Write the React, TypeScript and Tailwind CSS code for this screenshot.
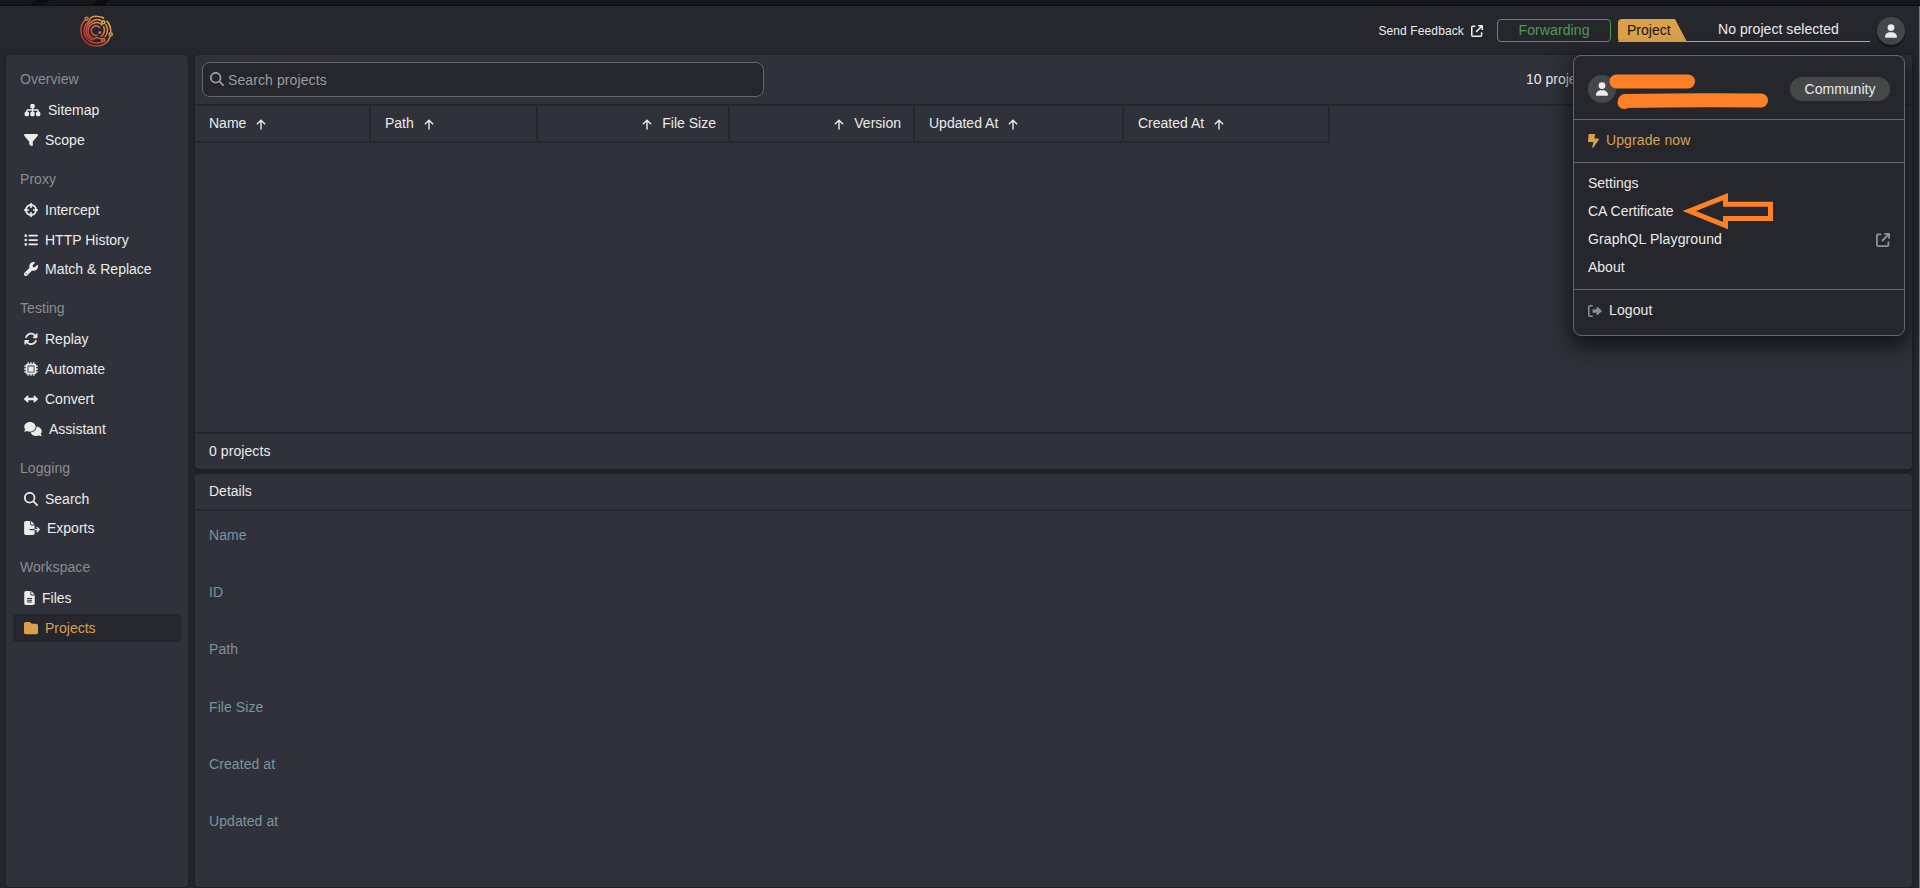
import type { ReactNode } from 'react'
import clsx from 'clsx'
import type { IconType } from 'react-icons'
import {
  FaSitemap, FaFilter, FaListUl, FaWrench, FaArrowsRotate, FaMicrochip, FaLeftRight,
  FaComments, FaMagnifyingGlass, FaFileExport, FaFileLines, FaFolder, FaUser,
} from 'react-icons/fa6'

type NavItem = { label: string; icon: IconType; size: string; active?: boolean }

function Crosshair({ className }: { className?: string }) {
  return (
    <svg viewBox="0 0 14 14" className={className} fill="none" stroke="currentColor" strokeWidth="2">
      <circle cx="7" cy="7" r="5" />
      <path d="M7 0v5M7 9V14M0 7h5M9 7H14" strokeWidth="1.6" />
    </svg>
  )
}

const groups: { title: string; items: NavItem[] }[] = [
  {
    title: 'Overview',
    items: [
      { label: 'Sitemap', icon: FaSitemap, size: 'w-[17px]' },
      { label: 'Scope', icon: FaFilter, size: 'w-3.5' },
    ],
  },
  {
    title: 'Proxy',
    items: [
      { label: 'Intercept', icon: Crosshair as IconType, size: 'w-3.5' },
      { label: 'HTTP History', icon: FaListUl, size: 'w-3.5' },
      { label: 'Match & Replace', icon: FaWrench, size: 'w-3.5' },
    ],
  },
  {
    title: 'Testing',
    items: [
      { label: 'Replay', icon: FaArrowsRotate, size: 'w-3.5' },
      { label: 'Automate', icon: FaMicrochip, size: 'w-3.5' },
      { label: 'Convert', icon: FaLeftRight, size: 'w-3.5' },
      { label: 'Assistant', icon: FaComments, size: 'w-[18px]' },
    ],
  },
  {
    title: 'Logging',
    items: [
      { label: 'Search', icon: FaMagnifyingGlass, size: 'w-3.5' },
      { label: 'Exports', icon: FaFileExport, size: 'w-4' },
    ],
  },
  {
    title: 'Workspace',
    items: [
      { label: 'Files', icon: FaFileLines, size: 'w-[11px]' },
      { label: 'Projects', icon: FaFolder, size: 'w-3.5', active: true },
    ],
  },
]

const columns = [
  { label: 'Name', width: 'w-[176px]' },
  { label: 'Path', width: 'w-[167px]' },
  { label: 'File Size', width: 'w-[192px]', right: true },
  { label: 'Version', width: 'w-[185px]', right: true },
  { label: 'Updated At', width: 'w-[209px]' },
  { label: 'Created At', width: 'w-[206px]' },
]

const details = ['Name', 'ID', 'Path', 'File Size', 'Created at', 'Updated at']

function Logo() {
  return (
    <svg viewBox="0 0 34 32" className="h-8 w-[34px]" fill="none" stroke="url(#logo)" strokeWidth="1.5" strokeLinecap="round">
      <defs>
        <linearGradient id="logo" x1="4" y1="27" x2="27" y2="5" gradientUnits="userSpaceOnUse">
          <stop stopColor="#b5282e" />
          <stop offset="0.5" stopColor="#d0603d" />
          <stop offset="1" stopColor="#eab04f" />
        </linearGradient>
      </defs>
      <path d="M6.2 4.8A15 15 0 0 0 28.5 26.4" />
      <path d="M31 21.5A15 15 0 0 1 28.4 26.5M31.8 16.5C31.7 12 30.5 9 28 6.3" />
      <path d="M12 2.6C15 1 21 .8 24.5 3M12 2.6L10 6.3A12 12 0 0 0 16.5 28C19.5 28.2 22 27.6 24 26.4" />
      <path d="M13.5 6.2C16 4.4 19.5 4.2 22 5.6M13.5 6.2A10.6 10.6 0 0 0 8.5 21C9.7 23 11.5 24.5 13 25" />
      <path d="M15 8.3A8 8 0 0 0 12.6 22.6L15.2 24L17 22.5L22 23.7M15 8.3C18 7 21 7.8 23 10" />
      <path d="M27 9.5C29.5 14 28.5 19 26.2 21.6M24.8 11.8C26 16 24.8 19.5 22.4 21.2" />
      <path d="M20.4 12.4A4.7 4.7 0 1 0 18.2 20.2" />
      <g strokeWidth="1.6">
        <circle cx="7.6" cy="3.8" r="1.5" />
        <circle cx="24.3" cy="7.2" r="1.5" />
        <circle cx="31.7" cy="19.2" r="1.5" />
        <circle cx="24.2" cy="25" r="1.5" />
        <circle cx="20.8" cy="17.6" r="0.7" />
      </g>
    </svg>
  )
}

function ExternalLink({ className }: { className?: string }) {
  return (
    <svg viewBox="0 0 14 14" className={className} fill="none" stroke="currentColor" strokeWidth="1.8" strokeLinejoin="round">
      <path d="M5.2 1.4H2A1.2 1.2 0 0 0 .9 2.6V12A1.2 1.2 0 0 0 2 13.1H11.2A1.2 1.2 0 0 0 12.4 12V8.4" />
      <path d="M8.3 .9H13.1V5.7M13.1 .9L6 8" />
    </svg>
  )
}

function SortArrow() {
  return (
    <svg viewBox="0 0 10 11" className="mt-0.5 h-[11px] w-2.5" fill="none" stroke="currentColor" strokeWidth="1.4">
      <path d="M5 10.5V1.3M.9 5.3L5 1.2L9.1 5.3" />
    </svg>
  )
}

function Bolt() {
  return (
    <svg viewBox="0 0 11 14" className="h-3.5 w-[11px]" fill="currentColor">
      <path d="M1.2 0H7.2L6.4 4.6H10.2C10.9 4.6 11.1 5.2 10.8 5.7L5.4 13.6C5 14.2 4.1 13.9 4.3 13.1L5.4 8.1H.8C.3 8.1 0 7.7 0 7.2L.5.7C.6.3.8 0 1.2 0Z" />
    </svg>
  )
}

function LogoutIcon() {
  return (
    <svg viewBox="0 0 14 12" className="h-3 w-3.5">
      <path d="M4.8.8H2A1.2 1.2 0 0 0 .8 2V10A1.2 1.2 0 0 0 2 11.2H4.8" fill="none" stroke="currentColor" strokeWidth="1.6" />
      <path d="M4.6 4.2H8.6V2.6C8.6 1.9 9.3 1.7 9.7 2.1L13.6 5.5C13.9 5.8 13.9 6.2 13.6 6.5L9.7 9.9C9.3 10.3 8.6 10.1 8.6 9.4V7.8H4.6Z" fill="currentColor" />
    </svg>
  )
}

function Avatar({ className }: { className?: string }) {
  return (
    <div className={clsx('flex size-7 shrink-0 items-center justify-center rounded-full bg-[#454849]', className)}>
      <FaUser className="h-3.5 w-3" />
    </div>
  )
}

function MenuSection({ className, children }: { className?: string; children: ReactNode }) {
  return <div className={clsx('border-b border-[#65676a] px-3.5', className)}>{children}</div>
}

function UserMenu() {
  return (
    <div className="absolute top-[55px] left-[1573px] h-[281px] w-[332px] rounded-lg border border-[#65676a] bg-[#25272d] shadow-[0_8px_22px_2px_#101116]">
      <MenuSection className="flex h-16 items-center justify-between">
        <Avatar className="mt-0.5" />
        <div className="mt-[3px] flex h-6 w-[100px] items-center justify-center rounded-full bg-[#454849]">Community</div>
      </MenuSection>
      <MenuSection className="flex h-[43px] items-center gap-[7px] text-[#daa04a]">
        <Bolt />
        <span className="pb-0.5 tracking-[0.1px]">Upgrade now</span>
      </MenuSection>
      <MenuSection className="flex h-[127px] flex-col pt-1.5">
        <div className="flex h-7 items-center">Settings</div>
        <div className="flex h-7 items-center">CA Certificate</div>
        <div className="flex h-7 items-center justify-between">
          <span className="tracking-[0.12px]">GraphQL Playground</span>
          <ExternalLink className="mt-0.5 size-3.5 text-[#929394]" />
        </div>
        <div className="flex h-7 items-center">About</div>
      </MenuSection>
      <div className="flex h-[42px] items-center gap-[7px] px-3.5">
        <span className="text-[#8b8c8e]"><LogoutIcon /></span>
        <span className="pb-0.5 tracking-[0.1px]">Logout</span>
      </div>

      {/* marker strokes over the account name and mail */}
      <svg viewBox="0 0 332 180" className="pointer-events-none absolute -top-px -left-px h-[180px] w-[332px]" fill="none" stroke="#ff8126">
        <path d="M43.5 26.5H115" strokeWidth="14" strokeLinecap="round" />
        <path d="M52 46Q120 44.8 188 45.5" strokeWidth="14" strokeLinecap="round" />
        <path d="M51 47.5H51.5" strokeWidth="13" strokeLinecap="round" />
        <path d="M116.3 156L152.5 141.7V149.2H197.5V163.5H152.5V170.5Z" strokeWidth="5" />
      </svg>
    </div>
  )
}

function Sidebar() {
  return (
    <nav className="w-[182px] rounded bg-[#2f323a] px-[7px] pt-2.5 shadow-[0_1px_4px_#1b1c20]">
      {groups.map((group) => (
        <div key={group.title} className="mb-2.5">
          <div className="flex h-[29px] items-center pb-px pl-[7px] tracking-[0.05px] text-[#8c8d8f]">{group.title}</div>
          <div className="flex flex-col gap-[1.75px] pt-[3px]">
            {group.items.map(({ label, icon: Icon, size, active }) => (
              <div
                key={label}
                className={clsx('-mt-px mb-px flex h-7 items-center gap-[7px] rounded px-[11px]', active && 'bg-[#25272d] text-[#daa04a]')}
              >
                <Icon className={clsx('h-3.5', size)} />
                <span>{label}</span>
              </div>
            ))}
          </div>
        </div>
      ))}
    </nav>
  )
}

export default function App() {
  return (
    <div className="relative flex h-[888px] w-[1920px] flex-col overflow-hidden bg-[#25272d] font-['Liberation_Sans',Arial,sans-serif] text-sm text-[#ecebe9]">
      <div className="h-1.5 shrink-0 border-b border-[#0c0d10] bg-[#16171c]">
        <svg viewBox="0 0 200 5" className="h-[5px] w-[200px]" fill="#0b0c0f">
          <path d="M37 0H50L42 5H30Z" />
          <path d="M97 0H109L105 5H92Z" />
        </svg>
      </div>

      <div className="flex flex-1 flex-col border-r border-[#77787b]">
        <header className="flex h-[49px] shrink-0 items-center justify-end pr-3.5">
          <div className="mr-auto ml-[79px]"><Logo /></div>
          <div className="flex items-center gap-[7px] text-xs tracking-[0.12px]">
            Send Feedback
            <ExternalLink className="size-3" />
          </div>
          <div className="ml-3.5 flex h-[23px] w-[114px] items-center justify-center rounded border border-[#4d9a55] pb-px tracking-[0.1px] text-[#4d9a55]">
            Forwarding
          </div>
          <div className="ml-[7px] flex h-[23px] w-[252px] bg-linear-to-t from-[#daa04a] from-[1px] to-transparent to-[1px]">
            <div className="w-[69px] rounded-l bg-[#daa04a] pl-[9px] leading-[22px] text-[#15161a] [clip-path:polygon(0_0,57px_0,100%_100%,0_100%)]">
              Project
            </div>
            <div className="flex-1 text-center leading-5 tracking-[0.05px]">No project selected</div>
          </div>
          <Avatar className="ml-[7px] shadow-[0_2px_2px_#101115]" />
        </header>

        <div className="flex flex-1 gap-[7px] pr-[7px] pb-px pl-1.5">
          <Sidebar />
          <main className="flex flex-1 flex-col gap-[5px]">
            <section className="flex h-[414px] flex-col rounded bg-[#2f323a] shadow-[0_1px_4px_#15161a]">
              <div className="flex h-[49px] items-center">
                <div className="ml-[7px] flex h-[35px] w-[562px] items-center gap-1 rounded-lg border border-[#65676a] bg-[#25272d] pl-[7px] text-[#9c9d9e]">
                  <FaMagnifyingGlass className="mb-0.5 size-3.5" />
                  <span className="tracking-[0.1px]">Search projects</span>
                </div>
                <div className="ml-[762px] pb-0.5 whitespace-nowrap">10 projects left</div>
              </div>
              <div className="h-0.5 bg-[#25272d]" />
              <div className="flex h-[37px]">
                {columns.map(({ label, width, right }) => (
                  <div
                    key={label}
                    className={clsx('flex items-center gap-2.5 border-r-2 border-b-2 border-[#25272d] px-3.5', width, right && 'flex-row-reverse pr-3')}
                  >
                    <span className="pb-0.5">{label}</span>
                    <SortArrow />
                  </div>
                ))}
              </div>
              <div className="mt-auto flex h-[37px] items-center border-t-2 border-[#25272d] px-3.5 pb-0.5 tracking-[0.08px]">0 projects</div>
            </section>

            <section className="flex-1 rounded bg-[#2f323a] shadow-[0_1px_4px_#1b1c20]">
              <div className="flex h-[37px] items-center border-b-2 border-[#25272d] px-3.5 pb-0.5">Details</div>
              <div className="px-3.5 pt-3 tracking-[0.08px] text-[#7c959b]">
                {details.map((label) => (
                  <div key={label} className="h-[57.2px] leading-6">{label}</div>
                ))}
              </div>
            </section>
          </main>
        </div>
      </div>

      <UserMenu />
    </div>
  )
}
